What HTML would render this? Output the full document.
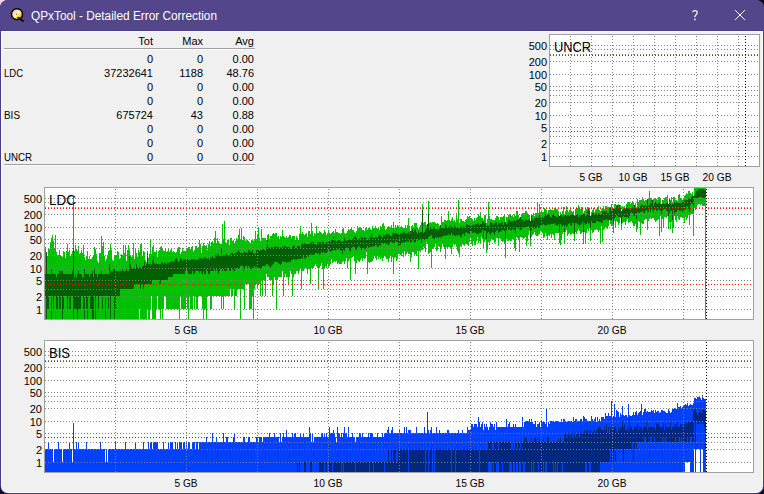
<!DOCTYPE html>
<html><head><meta charset="utf-8"><title>QPxTool - Detailed Error Correction</title>
<style>html,body{margin:0;padding:0;width:764px;height:494px;overflow:hidden;background:#0c0a1c;}
svg{shape-rendering:crispEdges;} text{shape-rendering:auto;}</style></head>
<body>
<svg width="764" height="494" viewBox="0 0 764 494" style="position:absolute;left:0;top:0;font-family:'Liberation Sans', sans-serif">
<rect x="0" y="0" width="764" height="494" fill="#0c0a1c"/>
<rect x="0" y="0" width="14" height="14" fill="#f2d2e6"/>
<rect x="0" y="0" width="764" height="494" rx="8" ry="8" fill="#4a3c84" shape-rendering="geometricPrecision"/>
<path d="M0 8 A8 8 0 0 1 8 0 H756 A8 8 0 0 1 764 8 V30 H0 Z" fill="#54468a" shape-rendering="geometricPrecision"/>
<path d="M1 31 H763 V486 A7 7 0 0 1 756 493 H8 A7 7 0 0 1 1 486 Z" fill="#fafafa" shape-rendering="geometricPrecision"/>
<path d="M2 32 H762 V486 A6 6 0 0 1 756 492 H8 A6 6 0 0 1 2 486 Z" fill="#f0f0f0" shape-rendering="geometricPrecision"/>
<g shape-rendering="geometricPrecision">
<defs><linearGradient id="ig" x1="0" y1="0" x2="1" y2="1"><stop offset="0" stop-color="#fff6ee"/><stop offset="0.3" stop-color="#ffd9a8"/><stop offset="0.5" stop-color="#fff3c8"/><stop offset="0.75" stop-color="#ffc400"/><stop offset="1" stop-color="#f0a000"/></linearGradient></defs>
<path d="M20 18.6 L23.6 21.6" stroke="#000" stroke-width="1.6"/>
<circle cx="17" cy="14.2" r="5.5" fill="url(#ig)" stroke="#000" stroke-width="1.4"/>
<circle cx="16.6" cy="14.2" r="0.6" fill="#54468a"/>
<path d="M17.2 18.2 Q18.5 17 19.6 18.2" stroke="#000" stroke-width="1.2" fill="none"/>
</g>
<text x="31" y="20" font-size="12" text-anchor="start" fill="#fff" textLength="186" lengthAdjust="spacingAndGlyphs">QPxTool - Detailed Error Correction</text>
<g shape-rendering="geometricPrecision"><path d="M692.7 12.3 Q692.9 10.5 695 10.5 Q697.3 10.5 697.3 12.6 Q697.3 14 695.9 15 Q694.9 15.8 694.9 17.3" stroke="#fff" stroke-width="1.25" fill="none"/><circle cx="694.9" cy="19.4" r="0.85" fill="#fff"/></g>
<path d="M735 10 L745 20 M745 10 L735 20" stroke="#fff" stroke-width="1" shape-rendering="geometricPrecision"/>
<rect x="4" y="48" width="251" height="1" fill="#a0a0a0"/><rect x="4" y="49" width="251" height="1" fill="#ffffff"/>
<rect x="4" y="164" width="251" height="1" fill="#a0a0a0"/><rect x="4" y="165" width="251" height="1" fill="#ffffff"/>
<text x="153" y="45" font-size="11" text-anchor="end" fill="#000">Tot</text>
<text x="203" y="45" font-size="11" text-anchor="end" fill="#000">Max</text>
<text x="254" y="45" font-size="11" text-anchor="end" fill="#000">Avg</text>
<text x="153" y="63" font-size="11" text-anchor="end" fill="#000">0</text>
<text x="203" y="63" font-size="11" text-anchor="end" fill="#000">0</text>
<text x="254" y="63" font-size="11" text-anchor="end" fill="#000">0.00</text>
<text x="4" y="77" font-size="11" text-anchor="start" fill="#000" textLength="19" lengthAdjust="spacingAndGlyphs">LDC</text>
<text x="153" y="77" font-size="11" text-anchor="end" fill="#000">37232641</text>
<text x="203" y="77" font-size="11" text-anchor="end" fill="#000">1188</text>
<text x="254" y="77" font-size="11" text-anchor="end" fill="#000">48.76</text>
<text x="153" y="91" font-size="11" text-anchor="end" fill="#000">0</text>
<text x="203" y="91" font-size="11" text-anchor="end" fill="#000">0</text>
<text x="254" y="91" font-size="11" text-anchor="end" fill="#000">0.00</text>
<text x="153" y="105" font-size="11" text-anchor="end" fill="#000">0</text>
<text x="203" y="105" font-size="11" text-anchor="end" fill="#000">0</text>
<text x="254" y="105" font-size="11" text-anchor="end" fill="#000">0.00</text>
<text x="4" y="119" font-size="11" text-anchor="start" fill="#000" textLength="16" lengthAdjust="spacingAndGlyphs">BIS</text>
<text x="153" y="119" font-size="11" text-anchor="end" fill="#000">675724</text>
<text x="203" y="119" font-size="11" text-anchor="end" fill="#000">43</text>
<text x="254" y="119" font-size="11" text-anchor="end" fill="#000">0.88</text>
<text x="153" y="133" font-size="11" text-anchor="end" fill="#000">0</text>
<text x="203" y="133" font-size="11" text-anchor="end" fill="#000">0</text>
<text x="254" y="133" font-size="11" text-anchor="end" fill="#000">0.00</text>
<text x="153" y="147" font-size="11" text-anchor="end" fill="#000">0</text>
<text x="203" y="147" font-size="11" text-anchor="end" fill="#000">0</text>
<text x="254" y="147" font-size="11" text-anchor="end" fill="#000">0.00</text>
<text x="4" y="161" font-size="11" text-anchor="start" fill="#000" textLength="28" lengthAdjust="spacingAndGlyphs">UNCR</text>
<text x="153" y="161" font-size="11" text-anchor="end" fill="#000">0</text>
<text x="203" y="161" font-size="11" text-anchor="end" fill="#000">0</text>
<text x="254" y="161" font-size="11" text-anchor="end" fill="#000">0.00</text>
<rect x="549" y="34" width="211" height="133" fill="#a0a0a0"/>
<rect x="550" y="35" width="209" height="131" fill="#fff"/>

<path d="M550 45.5H759" stroke="#808080" stroke-width="1" stroke-dasharray="1 2"/>
<path d="M550 49.5H759" stroke="#808080" stroke-width="1" stroke-dasharray="1 2"/>
<path d="M550 54.5H759" stroke="#808080" stroke-width="1" stroke-dasharray="1 2"/>
<path d="M550 61.5H759" stroke="#808080" stroke-width="1" stroke-dasharray="1 2"/>
<path d="M550 74.5H759" stroke="#808080" stroke-width="1" stroke-dasharray="1 2"/>
<path d="M550 86.5H759" stroke="#808080" stroke-width="1" stroke-dasharray="1 2"/>
<path d="M550 90.5H759" stroke="#808080" stroke-width="1" stroke-dasharray="1 2"/>
<path d="M550 95.5H759" stroke="#808080" stroke-width="1" stroke-dasharray="1 2"/>
<path d="M550 102.5H759" stroke="#808080" stroke-width="1" stroke-dasharray="1 2"/>
<path d="M550 115.5H759" stroke="#808080" stroke-width="1" stroke-dasharray="1 2"/>
<path d="M550 127.5H759" stroke="#808080" stroke-width="1" stroke-dasharray="1 2"/>
<path d="M550 136.5H759" stroke="#808080" stroke-width="1" stroke-dasharray="1 2"/>
<path d="M550 143.5H759" stroke="#808080" stroke-width="1" stroke-dasharray="1 2"/>
<path d="M550 156.5H759" stroke="#808080" stroke-width="1" stroke-dasharray="1 2"/>
<path d="M550 55.5H759" stroke="#ff0000" stroke-width="1" stroke-dasharray="1 2"/>
<path d="M550 131.5H759" stroke="#ff0000" stroke-width="1" stroke-dasharray="1 2"/>
<path d="M570.5 36V166" stroke="#808080" stroke-width="1" stroke-dasharray="1 2"/>
<path d="M591.5 36V166" stroke="#808080" stroke-width="1" stroke-dasharray="1 2"/>
<path d="M612.5 36V166" stroke="#808080" stroke-width="1" stroke-dasharray="1 2"/>
<path d="M633.5 36V166" stroke="#808080" stroke-width="1" stroke-dasharray="1 2"/>
<path d="M654.5 36V166" stroke="#808080" stroke-width="1" stroke-dasharray="1 2"/>
<path d="M675.5 36V166" stroke="#808080" stroke-width="1" stroke-dasharray="1 2"/>
<path d="M696.5 36V166" stroke="#808080" stroke-width="1" stroke-dasharray="1 2"/>
<path d="M717.5 36V166" stroke="#808080" stroke-width="1" stroke-dasharray="1 2"/>
<path d="M738.5 36V166" stroke="#808080" stroke-width="1" stroke-dasharray="1 2"/>
<path d="M745.5 36V166" stroke="#000" stroke-width="1" stroke-dasharray="1 2"/>
<text x="547" y="50" font-size="11" text-anchor="end" fill="#000">500</text>
<text x="547" y="66" font-size="11" text-anchor="end" fill="#000">200</text>
<text x="547" y="79" font-size="11" text-anchor="end" fill="#000">100</text>
<text x="547" y="91" font-size="11" text-anchor="end" fill="#000">50</text>
<text x="547" y="107" font-size="11" text-anchor="end" fill="#000">20</text>
<text x="547" y="120" font-size="11" text-anchor="end" fill="#000">10</text>
<text x="547" y="132" font-size="11" text-anchor="end" fill="#000">5</text>
<text x="547" y="148" font-size="11" text-anchor="end" fill="#000">2</text>
<text x="547" y="161" font-size="11" text-anchor="end" fill="#000">1</text>
<text x="579.5" y="181" font-size="11" text-anchor="start" fill="#000" textLength="23" lengthAdjust="spacingAndGlyphs">5 GB</text>
<text x="618.5" y="181" font-size="11" text-anchor="start" fill="#000" textLength="29" lengthAdjust="spacingAndGlyphs">10 GB</text>
<text x="660.5" y="181" font-size="11" text-anchor="start" fill="#000" textLength="29" lengthAdjust="spacingAndGlyphs">15 GB</text>
<text x="702.5" y="181" font-size="11" text-anchor="start" fill="#000" textLength="29" lengthAdjust="spacingAndGlyphs">20 GB</text>
<text x="554" y="52" font-size="14" text-anchor="start" fill="#000" textLength="37" lengthAdjust="spacingAndGlyphs">UNCR</text>
<rect x="44" y="187" width="710" height="133" fill="#a0a0a0"/>
<rect x="45" y="188" width="708" height="131" fill="#fff"/>
<path d="M45.5 247V319M46.5 252V319M47.5 256V319M48.5 248V319M49.5 249V319M50.5 242V319M51.5 238V319M52.5 235V319M53.5 241V319M54.5 249V319M55.5 235V319M56.5 252V319M57.5 255V319M58.5 255V319M59.5 250V319M60.5 256V319M61.5 256V319M62.5 257V319M63.5 251V319M64.5 252V319M65.5 258V319M66.5 251V319M67.5 244V319M68.5 252V319M69.5 250V319M70.5 256V319M71.5 254V319M72.5 251V319M73.5 197V319M74.5 251V319M75.5 245V319M76.5 249V319M77.5 251V319M78.5 246V319M79.5 254V319M80.5 253V319M81.5 250V319M82.5 253V319M83.5 245V319M84.5 257V319M85.5 260V319M86.5 256V319M87.5 251V319M88.5 259V319M89.5 256V319M90.5 259V319M91.5 259V319M92.5 257V319M93.5 255V319M94.5 247V319M95.5 249V319M96.5 254V319M97.5 261V319M98.5 263V319M99.5 253V319M100.5 253V319M101.5 236V319M102.5 246V319M103.5 242V319M104.5 256V319M105.5 261V319M106.5 259V319M107.5 255V319M108.5 251V319M109.5 250V319M110.5 244V319M111.5 250V319M112.5 260V319M113.5 261V319M114.5 256V319M115.5 255V319M116.5 255V319M117.5 251V319M118.5 252V319M119.5 259V319M120.5 258V319M121.5 254V319M122.5 255V319M123.5 245V319M124.5 253V319M125.5 245V319M126.5 261V319M127.5 250V319M128.5 245V319M129.5 250V319M130.5 255V319M131.5 257V319M132.5 255V319M133.5 243V319M134.5 259V319M135.5 249V319M136.5 253V319M137.5 257V319M138.5 250V319M139.5 252V309M140.5 244V319M141.5 244V319M142.5 256V319M143.5 251V319M144.5 252V319M145.5 260V319M146.5 262V319M147.5 251V309M148.5 258V319M149.5 254V319M150.5 240V309M151.5 254V296M152.5 247V319M153.5 245V319M154.5 252V319M155.5 252V319M156.5 250V309M157.5 257V296M158.5 251V309M159.5 250V309M160.5 247V319M161.5 246V309M162.5 248V319M163.5 251V309M164.5 251V296M165.5 249V296M166.5 252V309M167.5 251V309M168.5 249V309M169.5 252V309M170.5 250V309M171.5 249V309M172.5 252V309M173.5 251V309M174.5 252V309M175.5 253V309M176.5 252V309M177.5 248V309M178.5 247V309M179.5 247V319M180.5 254V296M181.5 252V309M182.5 248V309M183.5 251V309M184.5 251V309M185.5 251V309M186.5 250V296M187.5 248V309M188.5 247V319M189.5 247V296M190.5 249V309M191.5 247V309M192.5 246V309M193.5 252V296M194.5 250V309M195.5 246V296M196.5 246V309M197.5 248V309M198.5 247V296M199.5 240V296M200.5 244V296M201.5 253V296M202.5 246V309M203.5 243V319M204.5 245V309M205.5 246V309M206.5 245V319M207.5 250V296M208.5 244V296M209.5 241V296M210.5 246V309M211.5 242V309M212.5 241V296M213.5 243V296M214.5 238V296M215.5 231V296M216.5 244V296M217.5 238V296M218.5 241V296M219.5 243V296M220.5 244V296M221.5 244V309M222.5 224V296M223.5 239V309M224.5 221V296M225.5 242V296M226.5 243V296M227.5 240V296M228.5 239V296M229.5 245V296M230.5 238V289M231.5 238V296M232.5 241V296M233.5 240V289M234.5 244V309M235.5 241V296M236.5 238V296M237.5 239V289M238.5 235V289M239.5 229V289M240.5 239V319M241.5 228V289M242.5 240V289M243.5 236V289M244.5 237V309M245.5 241V284M246.5 239V284M247.5 240V284M248.5 241V284M249.5 242V309M250.5 243V309M251.5 240V309M252.5 240V296M253.5 241V319M254.5 239V289M255.5 231V284M256.5 239V284M257.5 235V289M258.5 228V284M259.5 238V284M260.5 241V296M261.5 229V280M262.5 238V296M263.5 238V280M264.5 238V280M265.5 238V296M266.5 240V274M267.5 235V277M268.5 234V277M269.5 239V280M270.5 236V280M271.5 236V280M272.5 234V296M273.5 233V284M274.5 234V277M275.5 233V280M276.5 233V309M277.5 237V280M278.5 236V277M279.5 239V277M280.5 236V277M281.5 237V277M282.5 230V271M283.5 236V296M284.5 237V277M285.5 238V274M286.5 236V277M287.5 238V277M288.5 237V284M289.5 235V277M290.5 235V271M291.5 238V274M292.5 236V296M293.5 236V277M294.5 236V274M295.5 240V274M296.5 236V271M297.5 238V271M298.5 240V274M299.5 234V271M300.5 226V269M301.5 234V289M302.5 232V271M303.5 234V271M304.5 235V269M305.5 234V268M306.5 233V269M307.5 237V274M308.5 231V269M309.5 231V269M310.5 234V284M311.5 223V268M312.5 231V269M313.5 236V268M314.5 233V266M315.5 234V264M316.5 226V266M317.5 233V268M318.5 233V289M319.5 231V268M320.5 232V266M321.5 233V263M322.5 234V269M323.5 233V289M324.5 230V268M325.5 232V266M326.5 235V268M327.5 233V264M328.5 230V268M329.5 233V266M330.5 234V264M331.5 233V259M332.5 232V263M333.5 231V262M334.5 233V261M335.5 229V262M336.5 232V261M337.5 232V264M338.5 233V263M339.5 233V264M340.5 234V264M341.5 233V264M342.5 229V262M343.5 228V261M344.5 233V264M345.5 234V261M346.5 233V258M347.5 231V268M348.5 229V261M349.5 230V259M350.5 229V280M351.5 228V258M352.5 230V257M353.5 230V256M354.5 232V261M355.5 233V274M356.5 231V263M357.5 226V260M358.5 228V261M359.5 227V262M360.5 227V260M361.5 228V258M362.5 230V261M363.5 230V258M364.5 231V259M365.5 228V258M366.5 228V252M367.5 230V274M368.5 228V262M369.5 227V263M370.5 229V262M371.5 230V262M372.5 226V261M373.5 228V259M374.5 228V256M375.5 226V258M376.5 228V260M377.5 229V256M378.5 228V259M379.5 230V257M380.5 226V259M381.5 228V258M382.5 224V261M383.5 223V258M384.5 226V255M385.5 230V257M386.5 229V259M387.5 227V259M388.5 226V262M389.5 227V258M390.5 227V256M391.5 225V262M392.5 228V257M393.5 222V274M394.5 228V258M395.5 225V257M396.5 227V261M397.5 225V259M398.5 226V254M399.5 229V254M400.5 227V255M401.5 226V256M402.5 227V253M403.5 228V257M404.5 228V251M405.5 225V255M406.5 228V254M407.5 225V252M408.5 218V254M409.5 226V254M410.5 231V262M411.5 226V257M412.5 225V252M413.5 227V252M414.5 223V255M415.5 223V254M416.5 223V256M417.5 227V251M418.5 229V269M419.5 227V251M420.5 225V252M421.5 222V250M422.5 204V250M423.5 223V247M424.5 222V248M425.5 222V252M426.5 225V242M427.5 224V244M428.5 201V254M429.5 223V253M430.5 222V252M431.5 223V268M432.5 222V248M433.5 222V249M434.5 222V247M435.5 223V243M436.5 224V251M437.5 223V250M438.5 224V246M439.5 226V247M440.5 225V252M441.5 216V248M442.5 222V244M443.5 222V247M444.5 220V248M445.5 220V259M446.5 221V247M447.5 220V248M448.5 211V247M449.5 220V247M450.5 221V249M451.5 219V254M452.5 217V247M453.5 221V244M454.5 220V245M455.5 222V244M456.5 213V247M457.5 219V251M458.5 200V253M459.5 223V257M460.5 219V246M461.5 219V247M462.5 221V244M463.5 221V245M464.5 222V246M465.5 220V244M466.5 219V244M467.5 216V245M468.5 217V246M469.5 216V242M470.5 218V238M471.5 218V243M472.5 219V246M473.5 221V241M474.5 218V245M475.5 220V245M476.5 218V241M477.5 217V237M478.5 214V243M479.5 216V241M480.5 212V243M481.5 218V237M482.5 218V239M483.5 220V249M484.5 215V242M485.5 215V240M486.5 223V253M487.5 219V250M488.5 202V242M489.5 216V245M490.5 219V241M491.5 219V239M492.5 220V240M493.5 220V240M494.5 220V243M495.5 218V242M496.5 216V238M497.5 216V238M498.5 217V246M499.5 220V238M500.5 217V239M501.5 217V241M502.5 217V242M503.5 216V241M504.5 215V243M505.5 222V258M506.5 217V239M507.5 217V241M508.5 215V241M509.5 214V240M510.5 215V241M511.5 216V241M512.5 215V239M513.5 217V239M514.5 214V248M515.5 216V251M516.5 211V237M517.5 211V238M518.5 215V240M519.5 218V252M520.5 217V237M521.5 214V237M522.5 213V238M523.5 213V239M524.5 213V238M525.5 211V237M526.5 211V246M527.5 213V241M528.5 214V235M529.5 215V231M530.5 221V246M531.5 215V237M532.5 215V235M533.5 213V234M534.5 216V232M535.5 213V235M536.5 213V236M537.5 202V236M538.5 213V235M539.5 204V234M540.5 212V231M541.5 211V231M542.5 212V233M543.5 212V238M544.5 208V237M545.5 209V233M546.5 210V236M547.5 213V240M548.5 210V235M549.5 210V236M550.5 209V234M551.5 210V238M552.5 210V234M553.5 210V235M554.5 208V240M555.5 207V233M556.5 209V233M557.5 209V233M558.5 211V233M559.5 216V243M560.5 212V245M561.5 215V239M562.5 211V234M563.5 207V232M564.5 215V243M565.5 211V232M566.5 206V230M567.5 210V236M568.5 212V234M569.5 210V233M570.5 209V235M571.5 211V234M572.5 212V233M573.5 211V234M574.5 215V241M575.5 209V232M576.5 209V234M577.5 208V231M578.5 205V229M579.5 208V231M580.5 209V234M581.5 207V233M582.5 209V232M583.5 213V244M584.5 211V232M585.5 209V244M586.5 209V233M587.5 207V229M588.5 208V231M589.5 208V228M590.5 216V241M591.5 212V230M592.5 210V233M593.5 208V232M594.5 212V230M595.5 210V230M596.5 209V229M597.5 208V230M598.5 206V232M599.5 210V230M600.5 211V244M601.5 209V226M602.5 208V242M603.5 206V230M604.5 209V229M605.5 206V227M606.5 206V227M607.5 207V229M608.5 207V226M609.5 208V220M610.5 207V224M611.5 204V226M612.5 207V225M613.5 208V233M614.5 204V221M615.5 204V227M616.5 205V221M617.5 205V222M618.5 204V225M619.5 205V223M620.5 205V218M621.5 211V230M622.5 206V223M623.5 207V222M624.5 206V222M625.5 208V225M626.5 204V221M627.5 202V219M628.5 202V223M629.5 202V222M630.5 204V222M631.5 203V221M632.5 201V223M633.5 202V226M634.5 205V226M635.5 203V224M636.5 208V232M637.5 199V229M638.5 202V221M639.5 200V222M640.5 200V235M641.5 200V223M642.5 197V224M643.5 199V224M644.5 201V220M645.5 200V219M646.5 200V219M647.5 199V230M648.5 199V221M649.5 191V219M650.5 198V218M651.5 198V219M652.5 200V218M653.5 199V218M654.5 198V220M655.5 198V222M656.5 199V221M657.5 200V220M658.5 197V219M659.5 197V236M660.5 199V216M661.5 204V232M662.5 200V219M663.5 200V228M664.5 198V217M665.5 197V217M666.5 197V218M667.5 195V216M668.5 204V229M669.5 198V222M670.5 200V229M671.5 197V222M672.5 202V233M673.5 197V228M674.5 197V216M675.5 200V220M676.5 200V222M677.5 201V216M678.5 195V219M679.5 194V220M680.5 198V217M681.5 199V217M682.5 200V218M683.5 199V218M684.5 196V223M685.5 195V217M686.5 193V220M687.5 194V218M688.5 191V215M689.5 191V225M690.5 193V214M691.5 194V214M692.5 192V214M693.5 196V236M694.5 188V208M695.5 188V210M696.5 188V207M697.5 188V205M698.5 188V204M699.5 188V204M700.5 188V205M701.5 188V204M702.5 188V206M703.5 188V206M704.5 188V206M705.5 188V319" stroke="#00c000" stroke-width="1" fill="none"/><path d="M45.5 274V296M46.5 252V319M47.5 274V309M48.5 274V309M49.5 274V296M50.5 274V296M51.5 268V319M52.5 274V296M53.5 274V309M54.5 274V296M55.5 274V296M56.5 277V309M57.5 274V309M58.5 274V296M59.5 271V309M60.5 271V309M61.5 271V296M62.5 271V319M63.5 274V309M64.5 274V296M65.5 274V296M66.5 274V296M67.5 274V309M68.5 274V296M69.5 274V309M70.5 274V309M71.5 274V296M72.5 271V296M73.5 248V319M74.5 277V309M75.5 274V309M76.5 277V309M77.5 274V319M78.5 271V309M79.5 274V309M80.5 274V309M81.5 274V296M82.5 277V296M83.5 277V309M84.5 269V319M85.5 274V296M86.5 274V309M87.5 274V319M88.5 274V296M89.5 277V296M90.5 274V309M91.5 274V309M92.5 271V319M93.5 277V319M94.5 269V296M95.5 274V319M96.5 274V296M97.5 277V296M98.5 274V309M99.5 274V296M100.5 274V296M101.5 271V296M102.5 274V309M103.5 274V296M104.5 274V296M105.5 274V319M106.5 274V296M107.5 274V296M108.5 274V309M109.5 264V296M110.5 271V319M111.5 271V296M112.5 271V296M113.5 269V296M114.5 269V319M115.5 271V309M116.5 271V296M117.5 271V296M118.5 271V296M119.5 271V296M120.5 271V289M121.5 271V289M122.5 269V289M123.5 271V289M124.5 271V289M125.5 271V289M126.5 269V289M127.5 271V289M128.5 271V289M129.5 255V289M130.5 264V289M131.5 268V289M132.5 268V289M133.5 268V289M134.5 268V284M135.5 268V284M136.5 264V284M137.5 268V284M138.5 268V284M139.5 266V284M140.5 268V289M141.5 268V284M142.5 266V284M143.5 266V289M144.5 261V284M145.5 266V284M146.5 264V284M147.5 253V284M148.5 264V284M149.5 264V284M150.5 265V284M151.5 264V284M152.5 260V280M153.5 256V280M154.5 263V280M155.5 264V280M156.5 263V280M157.5 264V280M158.5 264V280M159.5 264V284M160.5 264V284M161.5 262V280M162.5 262V280M163.5 264V280M164.5 262V280M165.5 263V280M166.5 264V280M167.5 262V280M168.5 263V277M169.5 262V277M170.5 262V277M171.5 261V277M172.5 261V277M173.5 262V274M174.5 261V274M175.5 259V274M176.5 258V274M177.5 260V274M178.5 262V274M179.5 261V274M180.5 258V274M181.5 259V274M182.5 261V274M183.5 259V274M184.5 259V274M185.5 260V271M186.5 260V269M187.5 259V271M188.5 260V274M189.5 260V274M190.5 260V274M191.5 259V274M192.5 259V271M193.5 259V274M194.5 259V274M195.5 260V271M196.5 259V271M197.5 260V271M198.5 259V271M199.5 258V274M200.5 258V271M201.5 258V274M202.5 259V274M203.5 258V271M204.5 257V274M205.5 258V274M206.5 258V269M207.5 259V271M208.5 258V274M209.5 260V274M210.5 257V271M211.5 258V271M212.5 256V271M213.5 258V271M214.5 258V269M215.5 255V271M216.5 254V269M217.5 255V271M218.5 254V274M219.5 255V271M220.5 256V269M221.5 248V269M222.5 255V271M223.5 255V269M224.5 255V271M225.5 254V271M226.5 254V271M227.5 255V268M228.5 256V269M229.5 255V271M230.5 254V271M231.5 253V269M232.5 253V269M233.5 253V271M234.5 254V271M235.5 253V269M236.5 252V268M237.5 252V269M238.5 250V269M239.5 252V268M240.5 253V266M241.5 253V266M242.5 253V266M243.5 252V271M244.5 252V269M245.5 253V266M246.5 252V266M247.5 253V268M248.5 250V266M249.5 250V269M250.5 251V269M251.5 252V269M252.5 250V269M253.5 253V268M254.5 254V266M255.5 253V268M256.5 250V268M257.5 250V268M258.5 250V268M259.5 251V268M260.5 250V269M261.5 250V268M262.5 249V266M263.5 249V266M264.5 250V266M265.5 251V266M266.5 247V264M267.5 239V264M268.5 247V266M269.5 248V266M270.5 248V268M271.5 247V266M272.5 247V265M273.5 248V264M274.5 247V262M275.5 246V262M276.5 247V262M277.5 247V263M278.5 247V263M279.5 248V264M280.5 247V265M281.5 248V264M282.5 246V261M283.5 248V262M284.5 246V262M285.5 246V262M286.5 247V263M287.5 247V262M288.5 247V262M289.5 247V262M290.5 249V262M291.5 248V260M292.5 246V260M293.5 246V259M294.5 245V259M295.5 248V260M296.5 248V260M297.5 246V259M298.5 246V259M299.5 246V259M300.5 248V259M301.5 244V258M302.5 243V259M303.5 243V256M304.5 243V258M305.5 244V259M306.5 243V257M307.5 244V255M308.5 244V257M309.5 244V256M310.5 243V254M311.5 242V255M312.5 242V255M313.5 242V255M314.5 244V254M315.5 244V253M316.5 245V253M317.5 242V254M318.5 242V253M319.5 242V255M320.5 242V254M321.5 243V252M322.5 241V253M323.5 242V252M324.5 244V253M325.5 243V253M326.5 242V253M327.5 242V252M328.5 242V250M329.5 241V251M330.5 242V252M331.5 240V251M332.5 240V251M333.5 237V250M334.5 241V250M335.5 240V251M336.5 241V250M337.5 241V249M338.5 240V249M339.5 240V250M340.5 241V251M341.5 242V250M342.5 241V254M343.5 241V250M344.5 238V251M345.5 240V249M346.5 241V248M347.5 240V248M348.5 239V248M349.5 239V250M350.5 240V252M351.5 240V248M352.5 239V247M353.5 237V247M354.5 237V247M355.5 236V249M356.5 238V250M357.5 239V248M358.5 239V246M359.5 238V247M360.5 238V249M361.5 236V250M362.5 238V248M363.5 238V248M364.5 237V249M365.5 238V249M366.5 238V248M367.5 240V246M368.5 239V248M369.5 238V247M370.5 237V247M371.5 234V247M372.5 237V246M373.5 238V247M374.5 238V246M375.5 237V245M376.5 237V245M377.5 238V247M378.5 236V247M379.5 235V245M380.5 235V246M381.5 237V244M382.5 237V243M383.5 234V244M384.5 235V244M385.5 235V244M386.5 234V244M387.5 233V245M388.5 235V245M389.5 234V244M390.5 236V242M391.5 236V242M392.5 234V243M393.5 232V243M394.5 234V243M395.5 233V241M396.5 233V242M397.5 234V242M398.5 234V246M399.5 234V245M400.5 233V245M401.5 233V243M402.5 233V244M403.5 231V242M404.5 232V243M405.5 234V242M406.5 233V241M407.5 233V242M408.5 232V242M409.5 234V240M410.5 231V243M411.5 231V242M412.5 229V240M413.5 232V241M414.5 230V243M415.5 229V242M416.5 232V239M417.5 234V241M418.5 231V240M419.5 233V240M420.5 232V239M421.5 232V243M422.5 210V239M423.5 233V240M424.5 232V240M425.5 230V239M426.5 228V239M427.5 224V239M428.5 214V237M429.5 230V236M430.5 227V236M431.5 229V235M432.5 229V238M433.5 227V239M434.5 228V239M435.5 229V237M436.5 229V238M437.5 229V237M438.5 229V238M439.5 228V237M440.5 225V237M441.5 228V238M442.5 228V236M443.5 228V236M444.5 227V236M445.5 224V235M446.5 226V236M447.5 227V235M448.5 227V234M449.5 227V236M450.5 225V235M451.5 226V233M452.5 227V235M453.5 228V235M454.5 225V236M455.5 227V236M456.5 227V235M457.5 227V236M458.5 228V235M459.5 227V235M460.5 227V237M461.5 226V237M462.5 227V234M463.5 226V234M464.5 227V236M465.5 226V233M466.5 224V232M467.5 225V234M468.5 225V233M469.5 225V234M470.5 225V231M471.5 226V231M472.5 225V233M473.5 224V233M474.5 225V232M475.5 224V233M476.5 224V234M477.5 223V234M478.5 223V234M479.5 225V233M480.5 224V233M481.5 224V232M482.5 221V230M483.5 222V238M484.5 223V231M485.5 223V231M486.5 226V240M487.5 225V233M488.5 226V232M489.5 225V234M490.5 222V235M491.5 223V233M492.5 223V232M493.5 225V233M494.5 223V235M495.5 222V232M496.5 222V231M497.5 225V230M498.5 223V233M499.5 223V232M500.5 223V232M501.5 222V231M502.5 222V230M503.5 225V230M504.5 222V231M505.5 222V241M506.5 224V230M507.5 223V228M508.5 220V230M509.5 220V229M510.5 222V230M511.5 221V231M512.5 221V229M513.5 221V230M514.5 220V230M515.5 221V233M516.5 220V228M517.5 219V228M518.5 220V228M519.5 218V229M520.5 217V230M521.5 219V230M522.5 220V228M523.5 220V228M524.5 221V227M525.5 219V228M526.5 220V227M527.5 220V227M528.5 220V226M529.5 219V228M530.5 221V239M531.5 216V230M532.5 219V227M533.5 220V228M534.5 218V229M535.5 218V228M536.5 217V228M537.5 218V226M538.5 217V228M539.5 215V228M540.5 218V225M541.5 218V225M542.5 217V225M543.5 218V224M544.5 216V225M545.5 214V226M546.5 216V225M547.5 215V225M548.5 214V224M549.5 215V225M550.5 217V224M551.5 217V224M552.5 215V224M553.5 214V224M554.5 216V223M555.5 216V225M556.5 217V225M557.5 217V226M558.5 215V224M559.5 216V232M560.5 215V224M561.5 215V226M562.5 217V226M563.5 215V225M564.5 216V232M565.5 215V225M566.5 216V227M567.5 215V226M568.5 215V224M569.5 216V223M570.5 215V225M571.5 215V226M572.5 214V223M573.5 214V223M574.5 216V234M575.5 216V223M576.5 215V223M577.5 214V224M578.5 217V225M579.5 215V226M580.5 215V225M581.5 215V224M582.5 214V222M583.5 214V232M584.5 214V223M585.5 216V225M586.5 215V224M587.5 211V222M588.5 208V224M589.5 211V223M590.5 216V228M591.5 215V221M592.5 213V223M593.5 213V223M594.5 215V223M595.5 214V223M596.5 213V221M597.5 214V221M598.5 213V222M599.5 214V222M600.5 215V222M601.5 214V223M602.5 211V223M603.5 211V220M604.5 211V220M605.5 211V221M606.5 211V219M607.5 213V220M608.5 213V221M609.5 209V220M610.5 208V220M611.5 211V221M612.5 209V220M613.5 209V224M614.5 209V218M615.5 209V217M616.5 206V215M617.5 205V216M618.5 206V217M619.5 205V217M620.5 208V217M621.5 211V224M622.5 210V217M623.5 209V216M624.5 209V217M625.5 209V217M626.5 207V217M627.5 206V217M628.5 208V218M629.5 209V216M630.5 210V213M631.5 208V212M632.5 207V213M633.5 206V216M634.5 205V216M635.5 208V213M636.5 208V219M637.5 208V212M638.5 207V213M639.5 207V213M640.5 206V212M641.5 204V212M642.5 205V211M643.5 205V213M644.5 206V213M645.5 205V211M646.5 206V210M647.5 199V212M648.5 205V212M649.5 205V209M650.5 203V212M651.5 200V209M652.5 200V210M653.5 206V213M654.5 203V210M655.5 202V209M656.5 203V211M657.5 204V211M658.5 203V209M659.5 202V210M660.5 204V211M661.5 204V214M662.5 204V210M663.5 203V210M664.5 204V209M665.5 204V209M666.5 203V211M667.5 202V211M668.5 204V216M669.5 199V213M670.5 203V210M671.5 205V211M672.5 204V220M673.5 204V210M674.5 202V214M675.5 202V212M676.5 202V212M677.5 203V210M678.5 202V210M679.5 203V211M680.5 203V211M681.5 203V210M682.5 202V212M683.5 200V212M684.5 201V210M685.5 200V210M686.5 200V206M687.5 200V209M688.5 198V209M689.5 199V212M690.5 198V205M691.5 197V203M692.5 196V204M693.5 196V212M694.5 195V198M695.5 193V198M696.5 191V198M697.5 190V198M698.5 189V198M699.5 189V197M700.5 189V197M701.5 189V197M702.5 189V198M703.5 189V198M704.5 190V198M705.5 190V197" stroke="#006000" stroke-width="1" fill="none"/>
<path d="M45 198.5H753" stroke="#808080" stroke-width="1" stroke-dasharray="1 2"/>
<path d="M45 202.5H753" stroke="#808080" stroke-width="1" stroke-dasharray="1 2"/>
<path d="M45 207.5H753" stroke="#808080" stroke-width="1" stroke-dasharray="1 2"/>
<path d="M45 214.5H753" stroke="#808080" stroke-width="1" stroke-dasharray="1 2"/>
<path d="M45 227.5H753" stroke="#808080" stroke-width="1" stroke-dasharray="1 2"/>
<path d="M45 239.5H753" stroke="#808080" stroke-width="1" stroke-dasharray="1 2"/>
<path d="M45 243.5H753" stroke="#808080" stroke-width="1" stroke-dasharray="1 2"/>
<path d="M45 248.5H753" stroke="#808080" stroke-width="1" stroke-dasharray="1 2"/>
<path d="M45 255.5H753" stroke="#808080" stroke-width="1" stroke-dasharray="1 2"/>
<path d="M45 268.5H753" stroke="#808080" stroke-width="1" stroke-dasharray="1 2"/>
<path d="M45 280.5H753" stroke="#808080" stroke-width="1" stroke-dasharray="1 2"/>
<path d="M45 289.5H753" stroke="#808080" stroke-width="1" stroke-dasharray="1 2"/>
<path d="M45 296.5H753" stroke="#808080" stroke-width="1" stroke-dasharray="1 2"/>
<path d="M45 309.5H753" stroke="#808080" stroke-width="1" stroke-dasharray="1 2"/>
<path d="M45 208.5H753" stroke="#ff0000" stroke-width="1" stroke-dasharray="1 2"/>
<path d="M45 284.5H753" stroke="#ff0000" stroke-width="1" stroke-dasharray="1 2"/>
<path d="M115.5 189V319" stroke="#808080" stroke-width="1" stroke-dasharray="1 2"/>
<path d="M186.5 189V319" stroke="#808080" stroke-width="1" stroke-dasharray="1 2"/>
<path d="M257.5 189V319" stroke="#808080" stroke-width="1" stroke-dasharray="1 2"/>
<path d="M328.5 189V319" stroke="#808080" stroke-width="1" stroke-dasharray="1 2"/>
<path d="M399.5 189V319" stroke="#808080" stroke-width="1" stroke-dasharray="1 2"/>
<path d="M470.5 189V319" stroke="#808080" stroke-width="1" stroke-dasharray="1 2"/>
<path d="M541.5 189V319" stroke="#808080" stroke-width="1" stroke-dasharray="1 2"/>
<path d="M612.5 189V319" stroke="#808080" stroke-width="1" stroke-dasharray="1 2"/>
<path d="M683.5 189V319" stroke="#808080" stroke-width="1" stroke-dasharray="1 2"/>
<path d="M706.5 189V319" stroke="#000" stroke-width="1" stroke-dasharray="1 2"/>
<text x="42" y="203" font-size="11" text-anchor="end" fill="#000">500</text>
<text x="42" y="219" font-size="11" text-anchor="end" fill="#000">200</text>
<text x="42" y="232" font-size="11" text-anchor="end" fill="#000">100</text>
<text x="42" y="244" font-size="11" text-anchor="end" fill="#000">50</text>
<text x="42" y="260" font-size="11" text-anchor="end" fill="#000">20</text>
<text x="42" y="273" font-size="11" text-anchor="end" fill="#000">10</text>
<text x="42" y="285" font-size="11" text-anchor="end" fill="#000">5</text>
<text x="42" y="301" font-size="11" text-anchor="end" fill="#000">2</text>
<text x="42" y="314" font-size="11" text-anchor="end" fill="#000">1</text>
<text x="174.5" y="334" font-size="11" text-anchor="start" fill="#000" textLength="23" lengthAdjust="spacingAndGlyphs">5 GB</text>
<text x="313.5" y="334" font-size="11" text-anchor="start" fill="#000" textLength="29" lengthAdjust="spacingAndGlyphs">10 GB</text>
<text x="455.5" y="334" font-size="11" text-anchor="start" fill="#000" textLength="29" lengthAdjust="spacingAndGlyphs">15 GB</text>
<text x="597.5" y="334" font-size="11" text-anchor="start" fill="#000" textLength="29" lengthAdjust="spacingAndGlyphs">20 GB</text>
<text x="49" y="205" font-size="14" text-anchor="start" fill="#000" textLength="27" lengthAdjust="spacingAndGlyphs">LDC</text>
<rect x="44" y="340" width="710" height="133" fill="#a0a0a0"/>
<rect x="45" y="341" width="708" height="131" fill="#fff"/>
<path d="M45.5 449V472M46.5 449V472M47.5 449V472M48.5 442V472M49.5 449V472M50.5 449V472M51.5 449V472M52.5 449V472M53.5 462V472M54.5 449V472M55.5 449V472M56.5 449V472M57.5 449V472M58.5 442V472M59.5 449V472M60.5 449V472M61.5 449V472M62.5 462V472M63.5 449V472M64.5 449V472M65.5 449V472M66.5 449V472M67.5 449V472M68.5 449V472M69.5 442V472M70.5 449V472M71.5 449V472M72.5 462V472M73.5 423V472M74.5 449V472M75.5 449V472M76.5 442V472M77.5 449V472M78.5 442V472M79.5 449V472M80.5 449V472M81.5 449V472M82.5 449V472M83.5 449V472M84.5 449V472M85.5 449V472M86.5 442V472M87.5 449V472M88.5 449V472M89.5 449V472M90.5 449V472M91.5 449V472M92.5 449V472M93.5 449V472M94.5 449V472M95.5 449V472M96.5 449V472M97.5 449V472M98.5 449V472M99.5 449V472M100.5 442V472M101.5 449V472M102.5 449V472M103.5 449V472M104.5 449V472M105.5 462V472M106.5 449V472M107.5 462V472M108.5 449V472M109.5 449V472M110.5 449V472M111.5 449V472M112.5 449V472M113.5 449V472M114.5 449V472M115.5 442V472M116.5 449V472M117.5 449V472M118.5 449V472M119.5 449V472M120.5 449V472M121.5 449V472M122.5 449V472M123.5 449V472M124.5 449V472M125.5 442V472M126.5 449V472M127.5 449V472M128.5 449V472M129.5 449V472M130.5 449V472M131.5 449V472M132.5 449V472M133.5 449V472M134.5 449V472M135.5 442V472M136.5 449V472M137.5 449V472M138.5 449V472M139.5 449V472M140.5 449V472M141.5 449V472M142.5 449V472M143.5 442V472M144.5 449V472M145.5 449V472M146.5 449V472M147.5 449V472M148.5 442V472M149.5 449V472M150.5 442V472M151.5 442V472M152.5 449V472M153.5 442V472M154.5 442V472M155.5 442V472M156.5 442V472M157.5 442V472M158.5 449V472M159.5 449V472M160.5 449V472M161.5 449V472M162.5 449V472M163.5 442V472M164.5 449V472M165.5 449V472M166.5 449V472M167.5 449V472M168.5 442V472M169.5 449V472M170.5 442V472M171.5 442V472M172.5 442V472M173.5 449V472M174.5 449V472M175.5 442V472M176.5 449V472M177.5 442V472M178.5 449V472M179.5 442V472M180.5 442V472M181.5 442V472M182.5 449V472M183.5 442V472M184.5 442V472M185.5 449V472M186.5 442V472M187.5 449V472M188.5 442V472M189.5 442V472M190.5 449V472M191.5 449V472M192.5 442V472M193.5 442V472M194.5 442V472M195.5 449V472M196.5 442V472M197.5 442V472M198.5 449V472M199.5 442V472M200.5 442V472M201.5 442V472M202.5 442V472M203.5 442V472M204.5 442V472M205.5 442V472M206.5 437V472M207.5 442V472M208.5 442V472M209.5 442V472M210.5 442V472M211.5 442V472M212.5 433V472M213.5 442V472M214.5 442V472M215.5 442V472M216.5 437V472M217.5 442V472M218.5 442V472M219.5 442V472M220.5 442V472M221.5 442V472M222.5 442V472M223.5 433V472M224.5 442V472M225.5 442V472M226.5 437V472M227.5 437V472M228.5 442V472M229.5 442V472M230.5 442V472M231.5 442V472M232.5 442V472M233.5 437V472M234.5 433V472M235.5 442V472M236.5 442V472M237.5 442V472M238.5 442V472M239.5 442V472M240.5 442V472M241.5 442V472M242.5 442V472M243.5 437V472M244.5 437V472M245.5 442V472M246.5 442V472M247.5 442V472M248.5 437V472M249.5 437V472M250.5 442V472M251.5 442V472M252.5 442V472M253.5 442V472M254.5 442V472M255.5 442V472M256.5 437V472M257.5 437V472M258.5 442V472M259.5 437V472M260.5 437V472M261.5 437V472M262.5 442V472M263.5 437V472M264.5 437V472M265.5 437V472M266.5 437V472M267.5 437V472M268.5 437V472M269.5 433V472M270.5 437V472M271.5 437V472M272.5 437V472M273.5 437V472M274.5 433V472M275.5 437V472M276.5 437V472M277.5 437V472M278.5 437V472M279.5 442V472M280.5 433V472M281.5 442V472M282.5 437V472M283.5 433V472M284.5 437V472M285.5 437V472M286.5 430V472M287.5 437V472M288.5 437V472M289.5 437V472M290.5 437V472M291.5 437V472M292.5 433V472M293.5 437V472M294.5 433V472M295.5 433V472M296.5 437V472M297.5 437V472M298.5 437V472M299.5 437V472M300.5 433V472M301.5 437V472M302.5 437V472M303.5 433V472M304.5 437V472M305.5 437V472M306.5 437V472M307.5 437V472M308.5 437V472M309.5 427V472M310.5 433V472M311.5 442V472M312.5 433V472M313.5 442V472M314.5 437V472M315.5 437V472M316.5 437V472M317.5 437V472M318.5 437V472M319.5 437V472M320.5 437V472M321.5 433V472M322.5 433V472M323.5 437V472M324.5 433V472M325.5 437V472M326.5 433V472M327.5 437V472M328.5 437V472M329.5 427V472M330.5 433V472M331.5 433V472M332.5 433V472M333.5 430V472M334.5 433V472M335.5 437V472M336.5 442V472M337.5 427V472M338.5 433V472M339.5 433V472M340.5 437V472M341.5 433V472M342.5 437V472M343.5 433V472M344.5 427V472M345.5 433V472M346.5 433V472M347.5 437V472M348.5 427V472M349.5 437V472M350.5 437V472M351.5 437V472M352.5 433V472M353.5 437V472M354.5 437V472M355.5 442V472M356.5 437V472M357.5 437V472M358.5 437V472M359.5 433V472M360.5 433V472M361.5 437V472M362.5 433V472M363.5 437V472M364.5 437V472M365.5 437V472M366.5 437V472M367.5 437V472M368.5 433V472M369.5 437V472M370.5 433V472M371.5 433V472M372.5 433V472M373.5 437V472M374.5 437V472M375.5 437V472M376.5 437V472M377.5 433V472M378.5 437V472M379.5 437V472M380.5 437V472M381.5 437V472M382.5 433V472M383.5 437V472M384.5 433V472M385.5 433V472M386.5 433V472M387.5 430V472M388.5 427V472M389.5 433V472M390.5 433V472M391.5 430V472M392.5 427V472M393.5 433V472M394.5 433V472M395.5 433V472M396.5 433V472M397.5 433V472M398.5 433V472M399.5 430V472M400.5 433V472M401.5 433V472M402.5 433V472M403.5 433V472M404.5 427V472M405.5 433V472M406.5 427V472M407.5 433V472M408.5 430V472M409.5 430V472M410.5 430V472M411.5 433V472M412.5 433V472M413.5 433V472M414.5 433V472M415.5 433V472M416.5 427V472M417.5 433V472M418.5 433V472M419.5 433V472M420.5 433V472M421.5 433V472M422.5 433V472M423.5 433V472M424.5 427V472M425.5 433V472M426.5 433V472M427.5 412V472M428.5 430V472M429.5 433V472M430.5 430V472M431.5 427V472M432.5 433V472M433.5 433V472M434.5 433V472M435.5 433V472M436.5 427V472M437.5 433V472M438.5 433V472M439.5 430V472M440.5 433V472M441.5 433V472M442.5 433V472M443.5 433V472M444.5 433V472M445.5 433V472M446.5 433V472M447.5 430V472M448.5 430V472M449.5 433V472M450.5 433V472M451.5 433V472M452.5 433V472M453.5 433V472M454.5 433V472M455.5 433V472M456.5 433V472M457.5 433V472M458.5 430V472M459.5 433V472M460.5 433V472M461.5 433V472M462.5 430V472M463.5 433V472M464.5 433V472M465.5 433V472M466.5 433V472M467.5 427V472M468.5 430V472M469.5 430V472M470.5 430V472M471.5 424V472M472.5 424V472M473.5 427V472M474.5 424V472M475.5 424V472M476.5 424V472M477.5 427V472M478.5 417V472M479.5 422V472M480.5 427V472M481.5 424V472M482.5 422V472M483.5 430V472M484.5 424V472M485.5 427V472M486.5 424V472M487.5 427V472M488.5 430V472M489.5 427V472M490.5 422V472M491.5 424V472M492.5 424V472M493.5 427V472M494.5 424V472M495.5 430V472M496.5 422V472M497.5 427V472M498.5 427V472M499.5 427V472M500.5 427V472M501.5 427V472M502.5 427V472M503.5 427V472M504.5 427V472M505.5 427V472M506.5 419V472M507.5 427V472M508.5 424V472M509.5 422V472M510.5 427V472M511.5 427V472M512.5 427V472M513.5 424V472M514.5 427V472M515.5 424V472M516.5 427V472M517.5 427V472M518.5 427V472M519.5 427V472M520.5 427V472M521.5 427V472M522.5 417V472M523.5 427V472M524.5 422V472M525.5 422V472M526.5 421V472M527.5 421V472M528.5 422V472M529.5 419V472M530.5 422V472M531.5 419V472M532.5 422V472M533.5 424V472M534.5 424V472M535.5 421V472M536.5 427V472M537.5 424V472M538.5 424V472M539.5 422V472M540.5 427V472M541.5 421V472M542.5 422V472M543.5 421V472M544.5 422V472M545.5 424V472M546.5 409V472M547.5 427V472M548.5 422V472M549.5 424V472M550.5 421V472M551.5 421V472M552.5 422V472M553.5 421V472M554.5 422V472M555.5 422V472M556.5 421V472M557.5 421V472M558.5 422V472M559.5 422V472M560.5 422V472M561.5 419V472M562.5 422V472M563.5 419V472M564.5 419V472M565.5 421V472M566.5 422V472M567.5 422V472M568.5 421V472M569.5 421V472M570.5 421V472M571.5 421V472M572.5 422V472M573.5 417V472M574.5 421V472M575.5 419V472M576.5 419V472M577.5 421V472M578.5 421V472M579.5 421V472M580.5 419V472M581.5 419V472M582.5 422V472M583.5 416V472M584.5 417V472M585.5 419V472M586.5 419V472M587.5 421V472M588.5 421V472M589.5 421V472M590.5 421V472M591.5 416V472M592.5 419V472M593.5 421V472M594.5 419V472M595.5 417V472M596.5 422V472M597.5 417V472M598.5 421V472M599.5 419V472M600.5 421V472M601.5 417V472M602.5 417V472M603.5 417V472M604.5 419V472M605.5 413V472M606.5 416V472M607.5 416V472M608.5 413V472M609.5 416V472M610.5 416V472M611.5 401V472M612.5 417V472M613.5 416V472M614.5 404V472M615.5 417V472M616.5 410V472M617.5 411V472M618.5 412V472M619.5 417V472M620.5 413V472M621.5 415V472M622.5 406V472M623.5 415V472M624.5 416V472M625.5 415V472M626.5 415V472M627.5 417V472M628.5 404V472M629.5 415V472M630.5 416V472M631.5 416V472M632.5 415V472M633.5 412V472M634.5 415V472M635.5 412V472M636.5 411V472M637.5 415V472M638.5 413V472M639.5 412V472M640.5 411V472M641.5 404V472M642.5 415V472M643.5 412V472M644.5 409V472M645.5 409V472M646.5 412V472M647.5 411V472M648.5 412V472M649.5 412V472M650.5 412V472M651.5 410V472M652.5 411V472M653.5 410V472M654.5 413V472M655.5 410V472M656.5 412V472M657.5 411V472M658.5 411V472M659.5 413V472M660.5 412V472M661.5 410V472M662.5 410V472M663.5 411V472M664.5 411V472M665.5 412V472M666.5 413V472M667.5 413V472M668.5 409V472M669.5 411V472M670.5 413V472M671.5 412V472M672.5 409V472M673.5 409V472M674.5 408V472M675.5 409V472M676.5 409V472M677.5 403V472M678.5 407V472M679.5 407V472M680.5 406V472M681.5 408V472M682.5 407V472M683.5 406V472M684.5 405V472M685.5 404V462M686.5 405V462M687.5 403V462M688.5 406V462M689.5 405V462M690.5 404V472M691.5 405V472M692.5 405V472M693.5 403V472M694.5 398V449M695.5 398V472M696.5 399V449M697.5 397V449M698.5 397V449M699.5 397V449M700.5 398V472M701.5 400V449M702.5 395V449M703.5 398V472M704.5 399V472M705.5 399V472" stroke="#0040ff" stroke-width="1" fill="none"/><path d="M297.5 462V472M299.5 462V472M304.5 462V472M305.5 462V472M310.5 462V472M311.5 462V472M319.5 462V472M320.5 462V472M321.5 462V472M322.5 462V472M323.5 462V472M325.5 462V472M326.5 462V472M329.5 462V472M330.5 462V472M331.5 462V472M333.5 462V472M334.5 462V472M335.5 462V472M336.5 462V472M337.5 462V472M338.5 462V472M339.5 462V472M340.5 462V472M342.5 462V472M344.5 462V472M345.5 462V472M346.5 462V472M347.5 462V472M348.5 462V472M349.5 462V472M350.5 462V472M351.5 462V472M352.5 462V472M353.5 462V472M354.5 462V472M356.5 462V472M357.5 462V472M358.5 462V472M359.5 462V472M360.5 462V472M361.5 462V472M362.5 462V472M363.5 462V472M364.5 462V472M365.5 462V472M366.5 462V472M367.5 462V472M368.5 462V472M370.5 462V472M371.5 462V472M372.5 462V472M374.5 462V472M375.5 462V472M376.5 462V472M377.5 462V472M378.5 462V472M379.5 462V472M380.5 462V472M381.5 462V472M382.5 462V472M383.5 462V472M385.5 462V472M386.5 462V472M387.5 462V472M388.5 449V472M389.5 462V472M390.5 462V472M391.5 449V472M392.5 462V472M393.5 449V472M394.5 449V472M395.5 449V472M396.5 462V472M397.5 462V472M398.5 449V472M399.5 449V472M400.5 449V472M401.5 449V472M402.5 449V472M403.5 449V472M404.5 449V472M405.5 449V472M406.5 449V472M407.5 449V472M409.5 449V472M410.5 449V472M411.5 449V472M412.5 449V472M413.5 449V472M414.5 449V472M415.5 449V472M416.5 449V472M417.5 449V472M418.5 449V472M419.5 449V472M420.5 449V472M421.5 449V472M422.5 449V472M423.5 449V472M424.5 449V472M426.5 449V472M427.5 449V472M429.5 449V472M430.5 449V472M431.5 449V472M433.5 449V472M435.5 449V472M436.5 449V472M437.5 449V472M438.5 449V472M439.5 449V472M440.5 449V472M441.5 449V472M442.5 449V472M443.5 449V472M444.5 449V472M445.5 449V472M446.5 449V472M447.5 449V472M448.5 449V472M449.5 449V472M450.5 449V472M452.5 449V472M453.5 449V472M454.5 449V472M456.5 449V472M457.5 449V472M458.5 449V472M459.5 449V472M460.5 449V472M461.5 449V472M462.5 449V472M463.5 449V472M464.5 449V472M465.5 449V472M466.5 449V472M467.5 449V472M468.5 449V472M469.5 449V472M470.5 449V472M471.5 449V472M472.5 449V472M473.5 449V472M474.5 449V472M475.5 449V472M476.5 449V472M477.5 449V472M478.5 449V472M480.5 449V472M481.5 449V472M482.5 449V472M483.5 449V472M484.5 449V472M485.5 449V472M486.5 449V472M487.5 449V472M488.5 442V462M489.5 442V462M490.5 442V462M491.5 442V462M492.5 449V472M493.5 449V462M494.5 442V472M495.5 442V472M496.5 442V462M497.5 442V462M498.5 449V462M499.5 442V472M500.5 442V472M501.5 442V472M502.5 442V462M503.5 442V472M504.5 442V472M505.5 442V472M506.5 442V472M507.5 442V472M508.5 442V472M509.5 442V462M510.5 442V462M511.5 449V462M512.5 449V472M513.5 442V462M514.5 449V462M515.5 442V472M516.5 442V462M517.5 449V462M518.5 442V472M519.5 442V462M520.5 449V462M521.5 442V472M522.5 442V472M523.5 442V462M524.5 437V462M525.5 437V472M526.5 437V472M527.5 442V472M528.5 442V472M529.5 442V472M530.5 442V472M531.5 437V462M532.5 442V472M533.5 442V462M534.5 437V472M535.5 437V472M536.5 442V472M537.5 437V472M538.5 442V462M539.5 437V472M540.5 442V472M541.5 437V472M542.5 442V472M543.5 437V462M544.5 442V472M545.5 442V462M546.5 442V462M547.5 437V472M548.5 437V472M549.5 442V472M550.5 442V472M551.5 442V472M552.5 442V472M553.5 442V462M554.5 442V472M555.5 442V462M556.5 442V472M557.5 442V462M558.5 437V472M559.5 442V472M560.5 437V472M561.5 442V472M562.5 442V462M563.5 442V472M564.5 433V472M565.5 433V472M566.5 437V472M567.5 433V472M568.5 433V472M569.5 437V472M570.5 433V472M571.5 433V472M572.5 437V472M573.5 430V472M574.5 433V472M575.5 437V472M576.5 433V472M577.5 433V472M578.5 433V472M579.5 437V472M580.5 433V472M581.5 430V472M582.5 433V472M583.5 433V472M584.5 430V472M585.5 433V462M586.5 430V462M587.5 430V472M588.5 433V472M589.5 430V462M590.5 433V462M591.5 430V472M592.5 433V472M593.5 430V472M594.5 430V472M595.5 433V472M596.5 430V472M597.5 430V472M598.5 427V472M599.5 427V472M600.5 427V462M601.5 430V462M602.5 430V462M603.5 430V462M604.5 427V462M605.5 430V462M606.5 424V462M607.5 433V462M608.5 427V462M609.5 433V462M610.5 427V449M611.5 430V462M612.5 427V449M613.5 430V462M614.5 427V449M615.5 427V462M616.5 430V449M617.5 433V449M618.5 427V449M619.5 430V449M620.5 427V449M621.5 427V449M622.5 421V449M623.5 427V462M624.5 424V449M625.5 430V449M626.5 430V449M627.5 427V449M628.5 430V449M629.5 419V449M630.5 427V449M631.5 427V449M632.5 430V442M633.5 430V462M634.5 427V449M635.5 427V442M636.5 427V449M637.5 424V442M638.5 430V442M639.5 427V442M640.5 427V442M641.5 427V442M642.5 430V442M643.5 427V442M644.5 427V437M645.5 427V437M646.5 422V442M647.5 430V442M648.5 427V442M649.5 427V442M650.5 427V437M651.5 427V442M652.5 427V442M653.5 427V442M654.5 427V437M655.5 430V442M656.5 424V442M657.5 422V442M658.5 424V442M659.5 427V442M660.5 427V442M661.5 427V442M662.5 427V437M663.5 422V442M664.5 430V442M665.5 424V437M666.5 427V442M667.5 427V442M668.5 427V442M669.5 427V442M670.5 422V442M671.5 430V442M672.5 427V442M673.5 427V442M674.5 424V442M675.5 424V437M676.5 427V442M677.5 421V442M678.5 427V442M679.5 427V437M680.5 424V442M681.5 424V437M682.5 427V442M683.5 427V442M684.5 424V442M685.5 421V442M686.5 424V442M687.5 422V437M688.5 422V442M689.5 422V442M690.5 421V437M691.5 421V437M692.5 421V442M693.5 408V442M694.5 410V421M695.5 409V442M696.5 412V422M697.5 415V424M698.5 413V424M699.5 409V424M700.5 412V422M701.5 413V424M702.5 408V422M703.5 410V424M704.5 410V427M705.5 411V449" stroke="#002880" stroke-width="1" fill="none"/>
<path d="M45 351.5H753" stroke="#808080" stroke-width="1" stroke-dasharray="1 2"/>
<path d="M45 355.5H753" stroke="#808080" stroke-width="1" stroke-dasharray="1 2"/>
<path d="M45 360.5H753" stroke="#808080" stroke-width="1" stroke-dasharray="1 2"/>
<path d="M45 367.5H753" stroke="#808080" stroke-width="1" stroke-dasharray="1 2"/>
<path d="M45 380.5H753" stroke="#808080" stroke-width="1" stroke-dasharray="1 2"/>
<path d="M45 392.5H753" stroke="#808080" stroke-width="1" stroke-dasharray="1 2"/>
<path d="M45 396.5H753" stroke="#808080" stroke-width="1" stroke-dasharray="1 2"/>
<path d="M45 401.5H753" stroke="#808080" stroke-width="1" stroke-dasharray="1 2"/>
<path d="M45 408.5H753" stroke="#808080" stroke-width="1" stroke-dasharray="1 2"/>
<path d="M45 421.5H753" stroke="#808080" stroke-width="1" stroke-dasharray="1 2"/>
<path d="M45 433.5H753" stroke="#808080" stroke-width="1" stroke-dasharray="1 2"/>
<path d="M45 442.5H753" stroke="#808080" stroke-width="1" stroke-dasharray="1 2"/>
<path d="M45 449.5H753" stroke="#808080" stroke-width="1" stroke-dasharray="1 2"/>
<path d="M45 462.5H753" stroke="#808080" stroke-width="1" stroke-dasharray="1 2"/>
<path d="M45 361.5H753" stroke="#ff0000" stroke-width="1" stroke-dasharray="1 2"/>
<path d="M45 437.5H753" stroke="#ff0000" stroke-width="1" stroke-dasharray="1 2"/>
<path d="M115.5 342V472" stroke="#808080" stroke-width="1" stroke-dasharray="1 2"/>
<path d="M186.5 342V472" stroke="#808080" stroke-width="1" stroke-dasharray="1 2"/>
<path d="M257.5 342V472" stroke="#808080" stroke-width="1" stroke-dasharray="1 2"/>
<path d="M328.5 342V472" stroke="#808080" stroke-width="1" stroke-dasharray="1 2"/>
<path d="M399.5 342V472" stroke="#808080" stroke-width="1" stroke-dasharray="1 2"/>
<path d="M470.5 342V472" stroke="#808080" stroke-width="1" stroke-dasharray="1 2"/>
<path d="M541.5 342V472" stroke="#808080" stroke-width="1" stroke-dasharray="1 2"/>
<path d="M612.5 342V472" stroke="#808080" stroke-width="1" stroke-dasharray="1 2"/>
<path d="M683.5 342V472" stroke="#808080" stroke-width="1" stroke-dasharray="1 2"/>
<path d="M706.5 342V472" stroke="#000" stroke-width="1" stroke-dasharray="1 2"/>
<text x="42" y="356" font-size="11" text-anchor="end" fill="#000">500</text>
<text x="42" y="372" font-size="11" text-anchor="end" fill="#000">200</text>
<text x="42" y="385" font-size="11" text-anchor="end" fill="#000">100</text>
<text x="42" y="397" font-size="11" text-anchor="end" fill="#000">50</text>
<text x="42" y="413" font-size="11" text-anchor="end" fill="#000">20</text>
<text x="42" y="426" font-size="11" text-anchor="end" fill="#000">10</text>
<text x="42" y="438" font-size="11" text-anchor="end" fill="#000">5</text>
<text x="42" y="454" font-size="11" text-anchor="end" fill="#000">2</text>
<text x="42" y="467" font-size="11" text-anchor="end" fill="#000">1</text>
<text x="174.5" y="487" font-size="11" text-anchor="start" fill="#000" textLength="23" lengthAdjust="spacingAndGlyphs">5 GB</text>
<text x="313.5" y="487" font-size="11" text-anchor="start" fill="#000" textLength="29" lengthAdjust="spacingAndGlyphs">10 GB</text>
<text x="455.5" y="487" font-size="11" text-anchor="start" fill="#000" textLength="29" lengthAdjust="spacingAndGlyphs">15 GB</text>
<text x="597.5" y="487" font-size="11" text-anchor="start" fill="#000" textLength="29" lengthAdjust="spacingAndGlyphs">20 GB</text>
<text x="49" y="358" font-size="14" text-anchor="start" fill="#000" textLength="21" lengthAdjust="spacingAndGlyphs">BIS</text>
</svg>
</body></html>
